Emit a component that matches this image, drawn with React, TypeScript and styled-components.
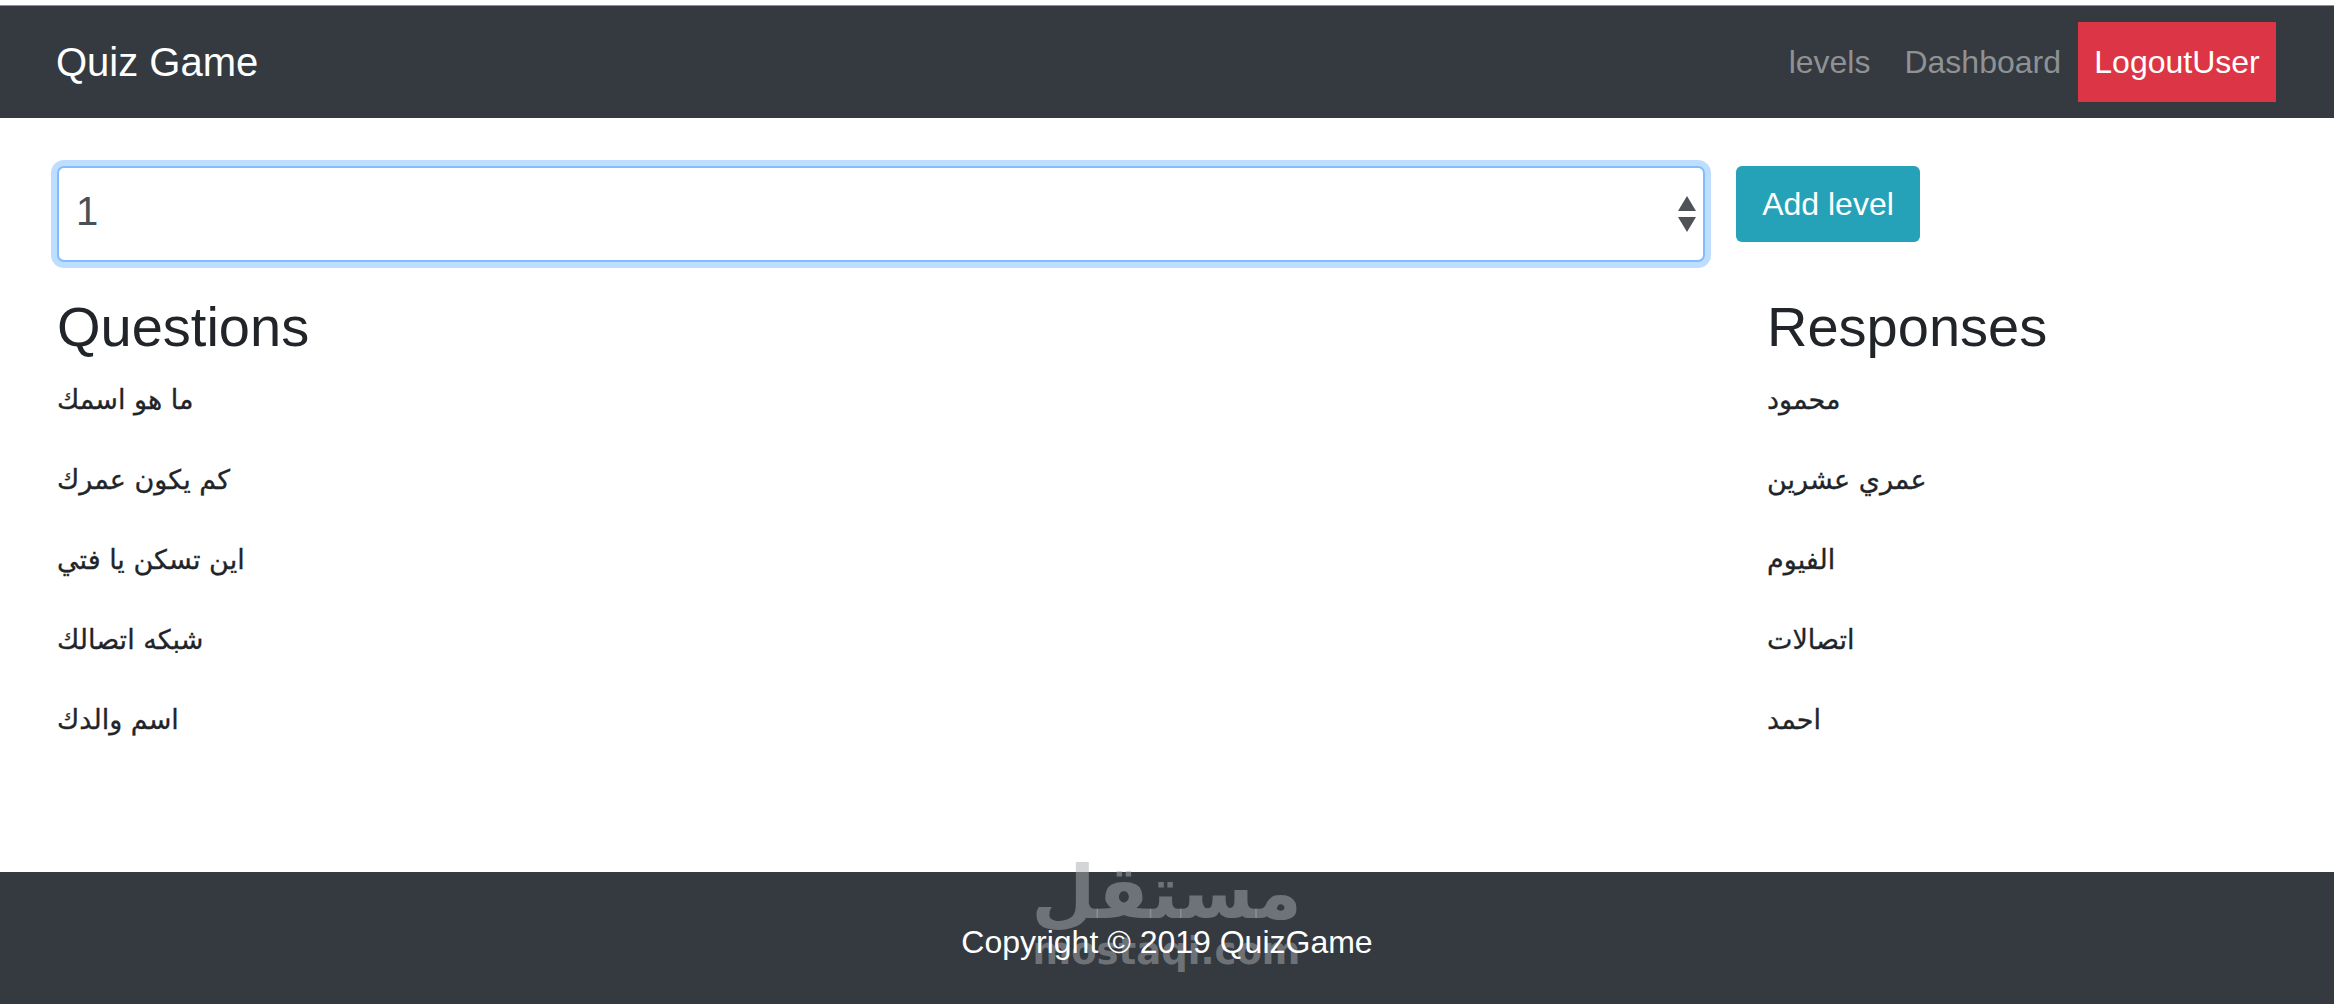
import styled, { createGlobalStyle } from "styled-components";

const GlobalStyle = createGlobalStyle`
  html, body {
    margin: 0;
    padding: 0;
    background: #fff;
  }
  body {
    font-family: "Liberation Sans", "DejaVu Sans", sans-serif;
    color: #212529;
  }
`;

const Page = styled.div`
  width: 2334px;
  height: 1004px;
  display: flex;
  flex-direction: column;
  overflow: hidden;
  border-top: 5px solid #fff;
  box-sizing: border-box;
`;

const Navbar = styled.nav`
  height: 113px;
  background: #343a40;
  border-top: 1px solid #8f9194;
  box-sizing: border-box;
  display: flex;
  align-items: center;
  justify-content: space-between;
  padding: 0 58px 0 56px;
`;

const Brand = styled.a`
  font-size: 40px;
  color: #fff;
`;

const NavLinks = styled.div`
  display: flex;
  align-items: center;
`;

const NavLink = styled.a`
  font-size: 32px;
  color: #8f9193;
  padding: 0 17px;
`;

const LogoutLink = styled.a`
  width: 198px;
  height: 80px;
  display: flex;
  align-items: center;
  justify-content: center;
  background: #dc3545;
  color: #fff;
  font-size: 32px;
`;

const Main = styled.main`
  flex: 1;
  padding: 48px 0 0 57px;
`;

const LevelRow = styled.div`
  display: flex;
  align-items: flex-start;
  gap: 31px;
`;

const SelectWrap = styled.div`
  position: relative;
  width: 1648px;
`;

const LevelSelect = styled.select`
  appearance: none;
  display: block;
  width: 100%;
  height: 96px;
  padding: 0 17px 6px;
  box-sizing: border-box;
  background: #fff;
  border: 2px solid #80bdff;
  border-radius: 7px;
  box-shadow: 0 0 0 6px #bfdeff;
  outline: none;
  font-family: inherit;
  font-size: 40px;
  color: #495057;
`;

const SelectArrows = styled.svg`
  position: absolute;
  right: 9px;
  top: 30px;
  width: 18px;
  height: 36px;
`;

const AddButton = styled.button`
  width: 184px;
  height: 76px;
  background: #25a2b8;
  color: #fff;
  border: none;
  border-radius: 6px;
  font-family: inherit;
  font-size: 32px;
  padding: 0;
`;

const Columns = styled.div`
  display: grid;
  grid-template-columns: 1710px 1fr;
  margin-top: 31px;
`;

const Heading = styled.h2`
  margin: 0 0 17px;
  font-size: 56px;
  font-weight: 400;
  line-height: 68px;
`;

const Item = styled.p`
  margin: 0;
  height: 80px;
  font-family: "DejaVu Sans", sans-serif;
  font-size: 27px;
  line-height: 44px;
  color: #212529;
  -webkit-text-stroke: 0.3px #212529;
`;

const Footer = styled.footer`
  position: relative;
  height: 132px;
  padding-top: 8px;
  box-sizing: border-box;
  background: #343a40;
  display: flex;
  align-items: center;
  justify-content: center;
  color: #fff;
  font-size: 32px;
`;

// the site's stamp sits over the footer and pokes out above it
const Watermark = styled.div`
  position: absolute;
  left: 1036px;
  top: -22px;
  width: 261px;
  display: flex;
  flex-direction: column;
  align-items: center;
  color: rgba(168, 171, 175, 0.5);
  pointer-events: none;
`;

const WatermarkArabic = styled.span`
  font-family: "DejaVu Sans", sans-serif;
  font-size: 74px;
  font-weight: 700;
  line-height: 84px;
`;

const WatermarkLatin = styled.span`
  font-family: "DejaVu Sans", sans-serif;
  font-size: 37px;
  font-weight: 700;
  line-height: 36px;
  white-space: nowrap;
`;

const FooterText = styled.span`
  position: relative;
`;

const questions = ["ما هو اسمك", "كم يكون عمرك", "اين تسكن يا فتي", "شبكه اتصالك", "اسم والدك"];
const responses = ["محمود", "عمري عشرين", "الفيوم", "اتصالات", "احمد"];

const App = () => {
  return (
    <>
      <GlobalStyle />
      <Page>
        <Navbar>
          <Brand>Quiz Game</Brand>
          <NavLinks>
            <NavLink>levels</NavLink>
            <NavLink>Dashboard</NavLink>
            <LogoutLink>LogoutUser</LogoutLink>
          </NavLinks>
        </Navbar>
        <Main>
          <LevelRow>
            <SelectWrap>
              <LevelSelect defaultValue="1">
                <option value="1">1</option>
                <option value="2">2</option>
              </LevelSelect>
              <SelectArrows viewBox="0 0 18 36">
                <path d="M9 0 L18 15 L0 15 Z" fill="#4f5358" />
                <path d="M0 21 L18 21 L9 36 Z" fill="#4f5358" />
              </SelectArrows>
            </SelectWrap>
            <AddButton>Add level</AddButton>
          </LevelRow>
          <Columns>
            <div>
              <Heading>Questions</Heading>
              {questions.map((q) => (
                <Item key={q}>{q}</Item>
              ))}
            </div>
            <div>
              <Heading>Responses</Heading>
              {responses.map((r) => (
                <Item key={r}>{r}</Item>
              ))}
            </div>
          </Columns>
        </Main>
        <Footer>
          <Watermark>
            <WatermarkArabic>مستقل</WatermarkArabic>
            <WatermarkLatin>mostaqi.com</WatermarkLatin>
          </Watermark>
          <FooterText>Copyright © 2019 QuizGame</FooterText>
        </Footer>
      </Page>
    </>
  );
};

export default App;
